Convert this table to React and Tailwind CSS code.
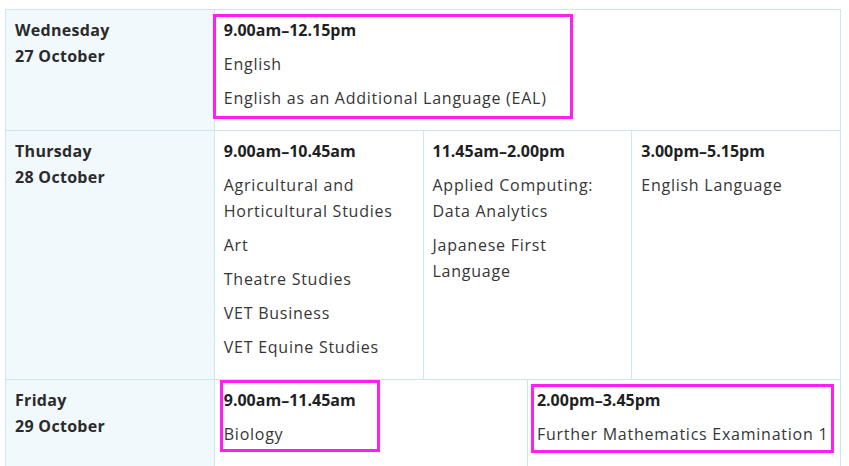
import React from 'react';

const Cell = ({ time, items, box, className = 'pr-5' }) => (
  <div className={`relative border-r border-b border-[#cbe7f1] pl-[9px] pt-[7px] pb-[11px] ${className}`}>
    <div className="font-bold text-[#1f1f1f] leading-[26px] mb-2">{time}</div>
    {items.map((it) => (
      <div key={it} className="leading-[26px] mb-2 text-[#363636] tracking-[0.75px]">{it}</div>
    ))}
    {box}
  </div>
);

const DayCell = ({ day, date, className = '' }) => (
  <div className={`border-r border-b border-[#cbe7f1] bg-[#f1f9fc] pl-[9px] pt-[7px] font-bold text-[#2b2b2b] leading-[26px] tracking-[0.3px] ${className}`}>
    <div>{day}</div>
    <div>{date}</div>
  </div>
);

export default function App() {
  return (
    <div className="bg-white w-[849px] h-[466px] overflow-hidden pt-[9px] pl-[5px] text-[16px]" style={{ fontFamily: '"Open Sans", "Noto Sans", sans-serif' }}>
      <div className="w-[836px] border-l border-t border-[#cbe7f1]">
        <div className="grid grid-cols-4">
          <DayCell day="Wednesday" date="27 October" />
          <Cell
            className="col-span-3 pr-5"
            time="9.00am–12.15pm"
            items={['English', 'English as an Additional Language (EAL)']}
            box={<div className="absolute -left-[2px] top-[4px] w-[360px] h-[105px] border-[3px] border-[#ff1ff0]" />}
          />
        </div>
        <div className="grid grid-cols-4">
          <DayCell day="Thursday" date="28 October" />
          <Cell
            time="9.00am–10.45am"
            items={['Agricultural and Horticultural Studies', 'Art', 'Theatre Studies', 'VET Business', 'VET Equine Studies']}
          />
          <Cell time="11.45am–2.00pm" items={['Applied Computing: Data Analytics', 'Japanese First Language']} />
          <Cell time="3.00pm–5.15pm" items={['English Language']} />
        </div>
        <div className="grid grid-cols-8">
          <DayCell className="col-span-2" day="Friday" date="29 October" />
          <Cell
            className="col-span-3 pr-2"
            time="9.00am–11.45am"
            items={['Biology']}
            box={<div className="absolute left-[5px] top-0 w-[160px] h-[72px] border-[3px] border-[#ff1ff0]" />}
          />
          <Cell
            className="col-span-3 pr-1 whitespace-nowrap"
            time="2.00pm–3.45pm"
            items={['Further Mathematics Examination 1']}
            box={<div className="absolute left-[3px] top-[4px] w-[303px] h-[69px] border-[3px] border-[#ff1ff0]" />}
          />
        </div>
      </div>
    </div>
  );
}
